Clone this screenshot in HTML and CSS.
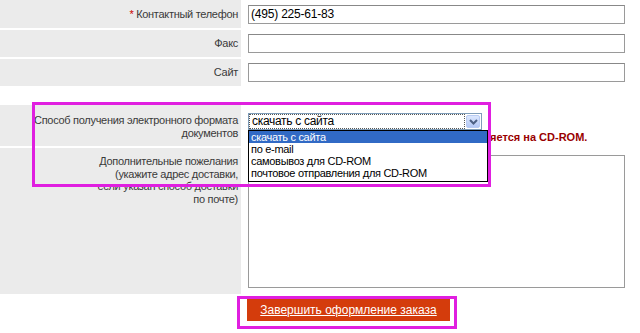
FILE: index.html
```html
<!DOCTYPE html>
<html lang="ru">
<head>
    <meta charset="UTF-8">
    <title>Оформление заказа</title>
    <link rel="stylesheet" href="styles.css">
</head>
<body>
    <div class="page">
        <div class="row row-short">
            <div class="label"><span><span class="req">*</span> Контактный телефон</span></div>
            <div class="field"><input type="text" class="text" value="(495) 225-61-83"></div>
        </div>
        <div class="row row-short">
            <div class="label">Факс</div>
            <div class="field"><input type="text" class="text"></div>
        </div>
        <div class="row row-short">
            <div class="label">Сайт</div>
            <div class="field"><input type="text" class="text"></div>
        </div>

        <div class="row row-format">
            <div class="label label-top">Способ получения электронного формата<br>документов</div>
            <div class="field field-top">
                <div class="select">
                    <div class="select-value"><span>скачать с сайта</span></div>
                    <div class="select-arrow">
                        <svg width="9" height="6" viewBox="0 0 9 6"><path d="M1 1 L4.5 4.5 L8 1" fill="none" stroke="#4d6185" stroke-width="2"/></svg>
                    </div>
                    <ul class="select-list">
                        <li class="selected">скачать с сайта</li>
                        <li>по e-mail</li>
                        <li>самовывоз для CD-ROM</li>
                        <li>почтовое отправления для CD-ROM</li>
                    </ul>
                </div>
                <p class="note">При выборе доставки документ предоставляется на CD-ROM.</p>
            </div>
        </div>
        <div class="row row-wishes">
            <div class="label label-top">Дополнительные пожелания<br>(укажите адрес доставки,<br>если указан способ доставки<br>по почте)</div>
            <div class="field field-top"><textarea class="area"></textarea></div>
        </div>

        <div class="submit-row">
            <button type="submit" class="submit">Завершить оформление заказа</button>
        </div>

        <div class="mark mark-select"></div>
        <div class="mark mark-submit"></div>
    </div>
</body>
</html>
```

FILE: styles.css
```css
body {
    margin: 0;
    padding: 0;
    background: #fff;
    font-family: "Liberation Sans", Arial, sans-serif;
    font-size: 11px;
    color: #333;
}

.page {
    position: relative;
    width: 640px;
    height: 333px;
    overflow: hidden;
}

.row {
    display: grid;
    grid-template-columns: 241px 1fr;
    margin-bottom: 2px;
}

.row-short {
    height: 27px;
    align-items: center;
}

.row-short:first-child {
    height: 28px;
}

.label {
    background: #ebebeb;
    height: 100%;
    display: flex;
    align-items: center;
    justify-content: flex-end;
    padding-right: 3px;
    box-sizing: border-box;
    text-align: right;
    line-height: 12.5px;
    letter-spacing: -0.3px;
    color: #3a3a3a;
}

.label-top {
    display: block;
}

.req {
    color: #cc0000;
}

.field {
    padding-left: 7px;
    padding-right: 15px;
}

.text {
    display: block;
    width: 100%;
    height: 19px;
    box-sizing: border-box;
    border: 1px solid #9a9a9a;
    border-top-color: #888;
    padding: 1px 2px;
    font-family: "Liberation Sans", Arial, sans-serif;
    font-size: 12px;
    letter-spacing: -0.2px;
    color: #000;
}

.row-format {
    margin-top: 19px;
    height: 41px;
}

.row-format .label {
    padding-top: 9px;
}

.field-top {
    padding-top: 8px;
}

.select {
    position: relative;
    width: 234px;
    height: 17px;
    box-sizing: border-box;
    border: 1px solid #7f9db9;
    display: flex;
    background: #fff;
}

.select-value {
    flex: 1;
    padding: 1px;
}

.select-value span {
    display: block;
    height: 13px;
    line-height: 13px;
    padding-left: 2px;
    outline: 1px dotted #555;
    font-size: 12px;
    letter-spacing: -0.3px;
    color: #000;
}

.select-arrow {
    width: 14px;
    margin: 1px;
    border-radius: 2px;
    background: linear-gradient(#dce7fd, #b4c8f6);
    border: 1px solid #b9cbf3;
    box-sizing: border-box;
    display: flex;
    align-items: center;
    justify-content: center;
}

.select-list {
    position: absolute;
    top: 16px;
    left: -1px;
    width: 238px;
    margin: 0;
    padding: 0 0 2px;
    list-style: none;
    background: #fff;
    border: 1px solid #000;
    z-index: 2;
}

.select-list li {
    height: 12px;
    line-height: 12px;
    padding-left: 2px;
    font-size: 11px;
    letter-spacing: -0.3px;
    color: #000;
}

.select-list li.selected {
    background: #316ac5;
    color: #fff;
}

.note {
    margin: 1px 0 0;
    font-weight: bold;
    color: #990000;
    line-height: 13px;
    white-space: nowrap;
}

.row-wishes {
    height: 146px;
    margin-bottom: 0;
}

.row-wishes .label {
    padding-top: 7px;
}

.row-wishes .field-top {
    padding-top: 7px;
}

.area {
    display: block;
    width: 100%;
    height: 133px;
    box-sizing: border-box;
    border: 1px solid #9a9a9a;
    resize: none;
}

.submit-row {
    padding: 5px 0 0 247px;
}

.submit {
    width: 203px;
    height: 22px;
    background: #d43c0c;
    border: 0;
    color: #fff;
    text-decoration: underline;
    font-family: "Liberation Sans", Arial, sans-serif;
    font-size: 12px;
    padding: 0;
}

.mark {
    position: absolute;
    border: 3px solid #e01fe0;
    box-sizing: border-box;
    z-index: 3;
}

.mark-select {
    left: 32px;
    top: 102px;
    width: 459px;
    height: 85px;
}

.mark-submit {
    left: 237px;
    top: 296px;
    width: 220px;
    height: 33px;
}
```
